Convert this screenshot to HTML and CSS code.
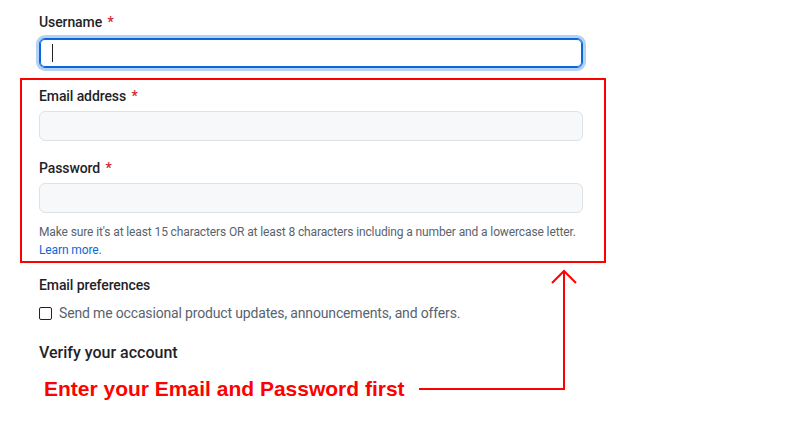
FILE: index.html
```html
<!DOCTYPE html>
<html lang="en">
<head>
<meta charset="utf-8">
<title>Sign up</title>
<link rel="stylesheet" href="styles.css">
</head>
<body>
<div class="page">
  <form class="form">
    <div class="group">
      <div class="label">Username <span class="req">*</span></div>
      <div class="field field-focus"><span class="caret"></span></div>
    </div>
    <div class="highlight">
      <div class="group">
        <div class="label">Email address <span class="req">*</span></div>
        <div class="field"></div>
      </div>
      <div class="group group-pw">
        <div class="label">Password <span class="req">*</span></div>
        <div class="field"></div>
        <p class="note">Make sure it's at least 15 characters OR at least 8 characters including a number and a lowercase letter. <a class="link" href="#">Learn more.</a></p>
      </div>
    </div>
    <div class="prefs">
      <div class="label label-prefs">Email preferences</div>
      <label class="check-row"><span class="checkbox"></span><span class="check-text">Send me occasional product updates, announcements, and offers.</span></label>
    </div>
    <h2 class="verify">Verify your account</h2>
  </form>
  <div class="annotation">Enter your Email and Password first</div>
  <svg class="arrow" width="791" height="422" viewBox="0 0 791 422">
    <path d="M419 389 H564 V271" fill="none" stroke="#ff0000" stroke-width="2"/>
    <path d="M552 283 L564 271 L576 283" fill="none" stroke="#ff0000" stroke-width="2"/>
  </svg>
</div>
</body>
</html>
```
FILE: styles.css
```css
* { box-sizing: border-box; }
html, body { margin: 0; padding: 0; background: #ffffff; }
body {
  font-family: Roboto, "Noto Sans", sans-serif;
  color: #1f2328;
  width: 791px;
  height: 422px;
  overflow: hidden;
}
.page { position: relative; width: 791px; height: 422px; }
.form {
  padding: 12px 0 0 39px;
  width: 583px;
  display: flex;
  flex-direction: column;
}
.label {
  font-size: 14px;
  line-height: 20px;
  font-weight: 500;
  margin-bottom: 6px;
  letter-spacing: -0.1px;
}
.highlight .label { margin-bottom: 5px; }
.label-prefs { margin-bottom: 8px; }
.req { color: #d1242f; margin-left: 2px; }
.field {
  height: 30px;
  width: 544px;
  border: 1px solid #dde2e7;
  border-radius: 6px;
  background: #f6f8fa;
  display: flex;
  align-items: center;
  padding-left: 12px;
}
.field-focus {
  background: #ffffff;
  border-color: #0969da;
  box-shadow: inset 0 0 0 1px #0969da, 0 0 0 3px rgba(9, 105, 218, 0.3);
}
.caret { width: 1px; height: 18px; background: #1f2328; }
.highlight {
  margin: 10px 0 0 -19px;
  width: 586px;
  border: 2px solid #ff0000;
  padding: 6px 21px 2px 17px;
}
.group-pw { margin-top: 17px; }
.note {
  margin: 10px 0 0;
  font-size: 12px;
  line-height: 18px;
  color: #59636e;
  letter-spacing: -0.12px;
  white-space: nowrap;
}
.link { display: block; color: #0969da; text-decoration: none; }
.prefs { margin-top: 12px; }
.check-row {
  display: flex;
  align-items: center;
  height: 20px;
  font-size: 14px;
  line-height: 20px;
}
.checkbox {
  width: 13px;
  height: 13px;
  border: 1px solid #1f2328;
  border-radius: 2px;
  margin-right: 7px;
  flex: none;
}
.check-text { color: #59636e; letter-spacing: -0.16px; }
.verify {
  margin: 18px 0 0;
  font-size: 16px;
  line-height: 24px;
  font-weight: 500;
}
.annotation {
  position: absolute;
  left: 44px;
  top: 377px;
  font-family: "Liberation Sans", Arial, sans-serif;
  font-weight: bold;
  font-size: 21px;
  line-height: 24px;
  color: #ff0000;
}
.arrow { position: absolute; left: 0; top: 0; pointer-events: none; }
```
